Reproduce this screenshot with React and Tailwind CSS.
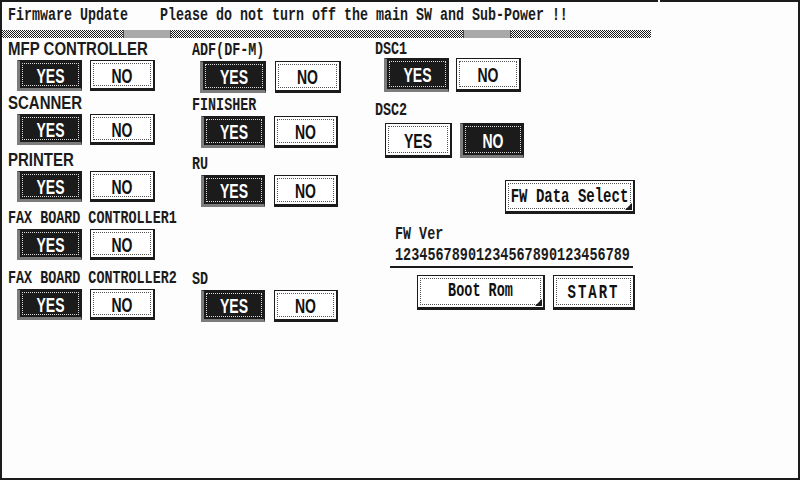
const mono = "font-['Liberation_Mono',monospace]";
const sans = "font-['Liberation_Sans',Arial,sans-serif]";

// tall, narrow mono label (~8px per character)
function MonoLabel({ children }) {
  return (
    <span className={`${mono} block origin-top scale-y-[1.4] whitespace-pre text-[13.4px] font-bold leading-[14px] text-[#1b1b1b]`}>
      {children}
    </span>
  );
}

function SansLabel({ children }) {
  return (
    <span className={`${sans} block scale-y-[1.2] whitespace-pre text-[15px] font-bold leading-[18px] text-[#1b1b1b]`}>
      {children}
    </span>
  );
}

function Corner() {
  return (
    <svg className="absolute bottom-[1px] right-[1px]" width="7" height="7" viewBox="0 0 7 7">
      <path d="M7 0 L7 7 L0 7 Z" fill="#1b1b1b" />
    </svg>
  );
}

function Btn({ on, children, size = "h-[31px] w-[65px]", text, corner = false }) {
  const label = text ?? (
    <span className={`${sans} block scale-y-[1.5] text-[14px] font-bold leading-none`}>{children}</span>
  );

  if (on) {
    return (
      <div
        className={`flex shrink-0 ${size} border border-b-[3px] border-l-[3px] border-[#1b1b1b] border-b-[#7c7c7c] border-l-[#7c7c7c] bg-[#1b1b1b] p-[2px]`}
      >
        <div className="flex flex-1 items-center justify-center border border-dotted border-[#d8d8d8] text-white">
          {label}
        </div>
      </div>
    );
  }
  return (
    <div className={`relative flex shrink-0 ${size} border border-b-[3px] border-r-2 border-[#1b1b1b] bg-white p-[2px]`}>
      <div className="flex flex-1 items-center justify-center border border-dotted border-[#555] text-[#111]">
        {label}
      </div>
      {corner && <Corner />}
    </div>
  );
}

function Field({
  label,
  isSans,
  className = "",
  labelH = "h-[20px]",
  gap = "gap-[8px]",
  indent = "ml-[9px]",
  size,
  yes = true,
}) {
  return (
    <div className={className}>
      <div className={`flex items-start ${labelH}`}>
        {isSans ? <SansLabel>{label}</SansLabel> : <MonoLabel>{label}</MonoLabel>}
      </div>
      <div className={`flex ${indent} ${gap}`}>
        <Btn on={yes} size={size}>YES</Btn>
        <Btn on={!yes} size={size}>NO</Btn>
      </div>
    </div>
  );
}

// stippled progress band under the title
function Stripe() {
  return (
    <svg width="649" height="8" className="block" shapeRendering="crispEdges">
      <defs>
        <pattern id="dots" width="2" height="2" patternUnits="userSpaceOnUse">
          <rect width="2" height="2" fill="#ffffff" />
          <rect x="0" y="0" width="1" height="1" fill="#1b1b1b" />
          <rect x="1" y="1" width="1" height="1" fill="#1b1b1b" />
        </pattern>
      </defs>
      <rect width="649" height="8" fill="url(#dots)" />
      <rect x="121" y="0" width="47" height="8" fill="#a9a9a9" />
      <rect x="461" y="0" width="47" height="8" fill="#a9a9a9" />
      <rect x="121" y="0" width="1" height="8" fill="#444" />
      <rect x="168" y="0" width="1" height="8" fill="#444" />
      <rect x="461" y="0" width="1" height="8" fill="#444" />
      <rect x="508" y="0" width="1" height="8" fill="#444" />
    </svg>
  );
}

const btnMono = `${mono} block scale-y-[1.45] whitespace-pre font-bold leading-none`;

export default function App() {
  return (
    <div className="flex h-[480px] w-[800px] border-x-2 border-b-2 border-[#1b1b1b] bg-[#fdfdfd]">
      <div className="w-[656px] shrink-0 border-t-2 border-[#1b1b1b]">
        <div className="flex h-[28px] items-start pl-[6px] pt-[4px]">
          <span className={`${mono} block origin-top scale-y-[1.35] whitespace-pre text-[13.33px] font-bold leading-[14px] text-[#1b1b1b]`}>
            {"Firmware Update    Please do not turn off the main SW and Sub-Power !!"}
          </span>
        </div>
        <Stripe />

        <div className="flex pl-[6px]">
          {/* column 1 */}
          <div className="w-[184px] shrink-0 pt-[2px]">
            <Field label="MFP CONTROLLER" isSans />
            <Field label="SCANNER" isSans className="mt-[3px]" />
            <Field label="PRINTER" isSans className="mt-[6px]" />
            <Field label="FAX BOARD CONTROLLER1" className="mt-[7px]" />
            <Field label="FAX BOARD CONTROLLER2" className="mt-[9px]" />
          </div>

          {/* column 2 */}
          <div className="w-[183px] shrink-0 pt-[3px]">
            <Field label="ADF(DF-M)" gap="gap-[9px]" size="h-[32px] w-[66px]" indent="ml-[8px]" />
            <Field label="FINISHER" gap="gap-[9px]" size="h-[32px] w-[64px]" className="mt-[3px]" />
            <Field label="RU" gap="gap-[9px]" size="h-[32px] w-[64px]" className="mt-[7px]" />
            <Field label="SD" gap="gap-[9px]" size="h-[32px] w-[64px]" className="mt-[63px]" />
          </div>

          {/* column 3 */}
          <div className="flex w-[260px] shrink-0 flex-col pt-[2px]">
            <Field label="DSC1" labelH="h-[18px]" gap="gap-[7px]" size="h-[34px] w-[65px]" />
            <div className="mt-[9px]">
              <div className="flex h-[20px] items-start">
                <MonoLabel>DSC2</MonoLabel>
              </div>
              <div className="ml-[10px] mt-[2px] flex gap-[8px]">
                <Btn on={false} size="h-[35px] w-[67px]">YES</Btn>
                <Btn on size="h-[35px] w-[64px]">NO</Btn>
              </div>
            </div>

            <div className="mt-[22px] flex justify-end">
              <Btn size="h-[34px] w-[130px]" corner text={<span className={`${btnMono} text-[14px]`}>FW Data Select</span>} />
            </div>

            <div className="ml-[20px] mt-[11px] flex h-[18px] items-start">
              <MonoLabel>FW Ver</MonoLabel>
            </div>
            <div className="ml-[15px] mt-[3px] w-[243px] border-b-2 border-[#1b1b1b] pb-[2px] pl-[5px]">
              <div className="flex h-[18px] items-start">
                <span className={`${mono} block origin-top scale-y-[1.4] whitespace-pre text-[13.5px] font-bold leading-[14px] text-[#1b1b1b]`}>
                  12345678901234567890123456789
                </span>
              </div>
            </div>

            <div className="mt-[7px] flex justify-end gap-[8px]">
              <Btn size="h-[35px] w-[128px]" corner text={<span className={`${btnMono} text-[13.5px]`}>Boot Rom</span>} />
              <Btn size="h-[35px] w-[82px]" text={<span className={`${btnMono} text-[14px] tracking-[2px]`}>START</span>} />
            </div>
          </div>
        </div>
      </div>
      <div className="ml-[2px] flex-1 border-t-2 border-[#1b1b1b]" />
    </div>
  );
}
